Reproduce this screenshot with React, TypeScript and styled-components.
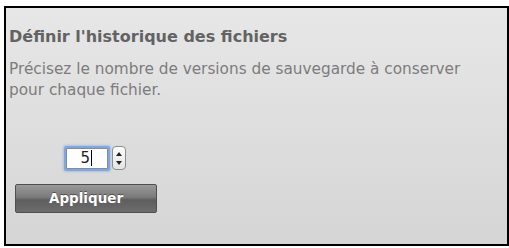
import React from "react";
import styled, { createGlobalStyle } from "styled-components";

const Global = createGlobalStyle`
  html, body { margin: 0; padding: 0; background: #ffffff; }
  body { font-family: "DejaVu Sans", "Liberation Sans", sans-serif; }
`;

const Panel = styled.div`
  margin: 6px 0 0 4px;
  width: 498px;
  height: 236px;
  border: 2px solid #000;
  background: linear-gradient(#e7e7e7, #d5d5d5);
  padding: 0 0 0 3px;
  box-sizing: content-box;
  display: flex;
  flex-direction: column;
`;

const Title = styled.h1`
  margin: 19px 0 0 0;
  font-size: 16px;
  line-height: 19px;
  font-weight: bold;
  color: #636363;
`;

const Desc = styled.p`
  margin: 13px 0 0 0;
  font-size: 15.3px;
  line-height: 21px;
  color: #7c7c7c;
  width: 475px;
`;

const SpinRow = styled.div`
  display: flex;
  align-items: center;
  gap: 4px;
  margin: 45px 0 0 57px;
`;

const NumberField = styled.div`
  width: 42px;
  height: 21px;
  background: #fff;
  border: 1px solid #8a8a8a;
  box-shadow: 0 0 0 2px #7ea6e0, 0 0 2px 3px rgba(126, 166, 224, 0.5);
  border-radius: 1px;
  display: flex;
  align-items: center;
  justify-content: flex-end;
  padding-right: 15px;
  box-sizing: border-box;
  font-size: 15px;
  color: #222;
`;

const Caret = styled.span`
  display: inline-block;
  width: 1px;
  height: 16px;
  background: #000;
  margin-left: 1px;
`;

const Stepper = styled.div`
  width: 14px;
  height: 24px;
  border: 1px solid #8d8d8d;
  border-radius: 4px;
  background: linear-gradient(#fdfdfd, #e4e4e4);
  display: flex;
  flex-direction: column;
  align-items: center;
  justify-content: space-around;
  box-sizing: border-box;
  padding: 2px 0;
`;

const Arrow = styled.span<{ $up?: boolean }>`
  width: 0;
  height: 0;
  border-left: 3px solid transparent;
  border-right: 3px solid transparent;
  ${(p) => (p.$up ? "border-bottom: 4px solid #222;" : "border-top: 4px solid #222;")}
`;

const ApplyButton = styled.button`
  margin: 14px 0 0 6px;
  width: 142px;
  height: 29px;
  border: 1px solid #4f4f4f;
  border-radius: 2px;
  background: linear-gradient(#9a9a9a 0%, #7a7a7a 45%, #5e5e5e 55%, #6c6c6c 100%);
  color: #fff;
  font-family: "DejaVu Sans", "Liberation Sans", sans-serif;
  font-weight: bold;
  font-size: 13.5px;
  text-shadow: 0 -1px 0 rgba(0, 0, 0, 0.4);
  padding: 0 0 2px 0;
  box-sizing: border-box;
`;

export default function App() {
  return (
    <>
      <Global />
      <Panel>
        <Title>Définir l'historique des fichiers</Title>
        <Desc>Précisez le nombre de versions de sauvegarde à conserver pour chaque fichier.</Desc>
        <SpinRow>
          <NumberField>
            5<Caret />
          </NumberField>
          <Stepper>
            <Arrow $up />
            <Arrow />
          </Stepper>
        </SpinRow>
        <ApplyButton>Appliquer</ApplyButton>
      </Panel>
    </>
  );
}
